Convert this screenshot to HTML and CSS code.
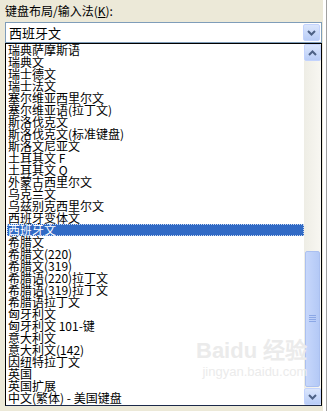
FILE: index.html
```html
<!DOCTYPE html>
<html lang="zh-CN">
<head>
  <meta charset="UTF-8" />
  <title>键盘布局</title>
  <link rel="stylesheet" href="styles.css">
</head>
<body>
  <div id="window">
    <div id="panel">
      <div class="label">键盘布局/输入法(<u>K</u>):</div>

      <div class="combo">
        <span class="combo-text">西班牙文</span>
        <span class="xp-btn">
          <svg width="9" height="6" viewBox="0 0 9 6"><path d="M1 1 L4.5 4.5 L8 1" fill="none" stroke="#4d6185" stroke-width="2"/></svg>
        </span>
      </div>

      <div class="list">
        <ul class="items">
          <li>瑞典萨摩斯语</li>
          <li>瑞典文</li>
          <li>瑞士德文</li>
          <li>瑞士法文</li>
          <li>塞尔维亚西里尔文</li>
          <li>塞尔维亚语(拉丁文)</li>
          <li>斯洛伐克文</li>
          <li>斯洛伐克文(标准键盘)</li>
          <li>斯洛文尼亚文</li>
          <li>土耳其文 F</li>
          <li>土耳其文 Q</li>
          <li>外蒙古西里尔文</li>
          <li>乌克兰文</li>
          <li>乌兹别克西里尔文</li>
          <li>西班牙变体文</li>
          <li class="selected">西班牙文</li>
          <li>希腊文</li>
          <li>希腊文(220)</li>
          <li>希腊文(319)</li>
          <li>希腊语(220)拉丁文</li>
          <li>希腊语(319)拉丁文</li>
          <li>希腊语拉丁文</li>
          <li>匈牙利文</li>
          <li>匈牙利文 101-键</li>
          <li>意大利文</li>
          <li>意大利文(142)</li>
          <li>因纽特拉丁文</li>
          <li>英国</li>
          <li>英国扩展</li>
          <li>中文(繁体) - 美国键盘</li>
        </ul>

        <div class="scrollbar">
          <span class="xp-btn">
            <svg width="9" height="6" viewBox="0 0 9 6"><path d="M1 5 L4.5 1.5 L8 5" fill="none" stroke="#4d6185" stroke-width="2"/></svg>
          </span>
          <div class="track">
            <div class="thumb">
              <svg width="7" height="8" viewBox="0 0 7 8"><path d="M0 0.5h7M0 2.5h7M0 4.5h7M0 6.5h7" stroke="#8ca8e6" stroke-width="1"/></svg>
            </div>
          </div>
          <span class="xp-btn">
            <svg width="9" height="6" viewBox="0 0 9 6"><path d="M1 1 L4.5 4.5 L8 1" fill="none" stroke="#4d6185" stroke-width="2"/></svg>
          </span>
        </div>

        <div class="watermark">
          <span class="wm-logo">Bai<b>du</b> 经验</span>
          <span class="wm-url">jingyan.baidu.com</span>
        </div>
      </div>
    </div>
    <div id="edge"></div>
  </div>
</body>
</html>
```

FILE: styles.css
```css
body { margin: 0; background: #fff; font-family: "Noto Sans CJK SC", sans-serif; font-size: 12px; }

#window { display: flex; width: 330px; height: 411px; }
#panel {
  width: 318px; height: 411px;
  background: #ece9d8;
  padding: 0 1px 0 5px;
  display: flex; flex-direction: column;
}
#edge { width: 3px; margin-left: 3px; border-left: 1px solid #a0a0a0; background: #fff; }

.label { height: 22px; padding-top: 3px; box-sizing: border-box; line-height: 16px; color: #000; }
.label u { text-decoration: underline; }

.combo {
  height: 21px; box-sizing: border-box;
  background: #fff;
  border: 1px solid #7f9db9;
  display: flex; align-items: center;
  padding: 1px 1px 1px 3px;
}
.combo-text { flex: 1; line-height: 16px; font-size: 13px; }

.xp-btn {
  width: 17px; height: 17px; box-sizing: border-box;
  display: flex; align-items: center; justify-content: center;
  background: linear-gradient(#dbe6fc, #b9cdf7);
  border: 1px solid #c3d3fd;
  border-radius: 2px;
}

.list {
  position: relative;
  height: 363px; box-sizing: border-box;
  background: #fff;
  border: 1px solid #000;
  border-bottom-color: #1c2a4a;
  display: flex;
}
.items { flex: 1; list-style: none; margin: 0; padding: 0 0 0 1px; }
.items li { height: 12px; line-height: 12px; padding-left: 1px; white-space: nowrap; color: #000; }
.items li.selected {
  background: #316ac5; color: #fff;
  outline: 1px dotted #c8d8f0; outline-offset: -1px;
}

.scrollbar { width: 17px; display: flex; flex-direction: column; background: #f4f2ea; }
.track {
  flex: 1;
  display: flex; flex-direction: column; justify-content: flex-end;
  padding-bottom: 1px;
  background: linear-gradient(to right, #eeede5, #f8f7f2);
}
.thumb {
  height: 134px;
  margin: 0 1px;
  display: flex; align-items: center; justify-content: center;
  background: linear-gradient(to right, #c7d7fb, #b4c9f6);
  border: 1px solid #abc0f0;
  border-radius: 2px;
}

.watermark {
  position: absolute; left: 190px; top: 288px;
  display: flex; flex-direction: column; align-items: flex-end;
  color: #ebebeb; pointer-events: none;
}
.wm-logo { font-family: "Liberation Sans", sans-serif; font-size: 22px; font-weight: bold; }
.wm-url { font-family: "Liberation Sans", sans-serif; font-size: 13px; }
```
